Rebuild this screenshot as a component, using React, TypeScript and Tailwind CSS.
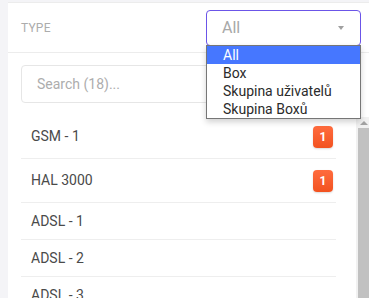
import React from 'react';

const rows = [
  { name: 'GSM - 1', count: 1 },
  { name: 'HAL 3000', count: 1 },
  { name: 'ADSL - 1' },
  { name: 'ADSL - 2' },
  { name: 'ADSL - 3' },
];

const options = ['All', 'Box', 'Skupina uživatelů', 'Skupina Boxů'];

export default function App() {
  return (
    <div className="relative flex w-[369px] h-[298px] overflow-hidden bg-[#f4f4f7] font-['Roboto',sans-serif]">
      {/* left gutter */}
      <div className="w-2 shrink-0" />

      <div className="flex-1 flex flex-col mt-[2px] bg-white border-t border-[#ececec] min-w-0">
        {/* Filter header */}
        <div className="h-[50px] shrink-0 flex items-center justify-between pl-[13px] pr-2 border-b border-[#ececec]">
          <span className="text-[12px] text-[#acacac] tracking-[0.2px] uppercase">Type</span>
          <div className="w-[155px] h-[36px] rounded-[4px] border border-[#6b55e8] flex items-center justify-between pl-[15px] pr-[16px]">
            <span className="text-[16px] text-[#a8a8a8]">All</span>
            <span className="w-0 h-0 border-l-[3px] border-r-[3px] border-t-[4px] border-l-transparent border-r-transparent border-t-[#a0a0a0]" />
          </div>
        </div>

        {/* Search + list */}
        <div className="flex-1 flex flex-col pl-[13px] min-h-0">
          <div className="mt-3 mr-[21px] h-[38px] shrink-0 rounded-[4px] border border-[#e6e6e6] flex items-center pl-[15px]">
            <span className="text-[14px] text-[#adadad]">Search (18)...</span>
          </div>

          <div className="flex-1 flex mt-[12px] min-h-0">
            <div className="flex-1 flex flex-col">
              {rows.map((r) => (
                <div
                  key={r.name}
                  className={`flex items-center justify-between shrink-0 pl-[10px] pr-[3px] border-b border-[#eeeeee] ${r.count ? 'h-[44px]' : 'h-[37px]'}`}
                >
                  <span className="text-[14px] text-[#4a4a4a]">{r.name}</span>
                  {r.count && (
                    <span className="w-[20px] h-[22px] rounded-[4px] bg-gradient-to-b from-[#ff6b3d] to-[#f2521f] shadow-[0_1px_2px_rgba(0,0,0,0.15)] flex items-center justify-center text-[12px] font-bold text-white">
                      {r.count}
                    </span>
                  )}
                </div>
              ))}
            </div>

            {/* scrollbar */}
            <div className="w-[33px] shrink-0 flex justify-end pt-[2px]">
              <div className="w-[13px] flex flex-col bg-[#f1f1f1]">
                <div className="h-[11px] flex items-center justify-center pl-[2px]">
                  <span className="w-0 h-0 border-l-[4px] border-r-[4px] border-b-[4px] border-l-transparent border-r-transparent border-b-[#a3a3a3]" />
                </div>
                <div className="flex-1 ml-[2px] bg-[#c1c1c1]" />
              </div>
            </div>
          </div>
        </div>
      </div>

      {/* open select options */}
      <div className="absolute left-[206px] top-[45px] w-[155px] border border-[#767676] bg-white shadow-[0_3px_6px_rgba(0,0,0,0.18)]">
        {options.map((o, i) => (
          <div
            key={o}
            className={`h-[18px] flex items-center pl-4 text-[14px] leading-none ${i === 0 ? 'bg-[#4677ff] text-white' : 'text-[#2b2b2b]'}`}
          >
            {o}
          </div>
        ))}
      </div>
    </div>
  );
}
